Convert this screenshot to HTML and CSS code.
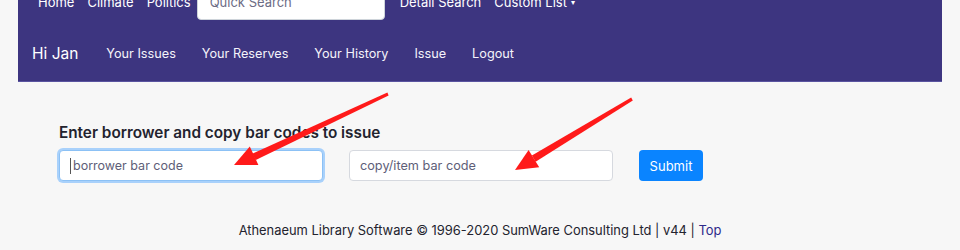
FILE: index.html
```html
<!DOCTYPE html>
<html lang="en">
<head>
  <meta charset="UTF-8" />
  <meta name="viewport" content="width=device-width, initial-scale=1" />
  <title>Issue</title>
  <link rel="stylesheet" href="styles.css">
</head>
<body>

  <!-- Barre de navigation -->
  <header class="navbar">
    <div class="top-row">
      <a href="#">Home</a>
      <a href="#">Climate</a>
      <a href="#">Politics</a>
      <input type="text" class="quick-search" placeholder="Quick Search" />
      <a href="#" class="detail">Detail Search</a>
      <a href="#">Custom List <span class="caret">&#9662;</span></a>
    </div>
    <div class="user-row">
      <span class="hello">Hi Jan</span>
      <a href="#">Your Issues</a>
      <a href="#">Your Reserves</a>
      <a href="#">Your History</a>
      <a href="#">Issue</a>
      <a href="#">Logout</a>
    </div>
  </header>

  <!-- Formulaire de pret -->
  <main class="content">
    <h3>Enter borrower and copy bar codes to issue</h3>
    <form class="issue-form">
      <div class="field focused">
        <span class="cursor"></span>
        <input type="text" placeholder="borrower bar code" />
      </div>
      <div class="field">
        <input type="text" placeholder="copy/item bar code" />
      </div>
      <button type="button" class="submit-btn">Submit</button>
    </form>
  </main>

  <footer>
    Athenaeum Library Software &copy; 1996-2020 SumWare Consulting Ltd | v44 | <a href="#">Top</a>
  </footer>

  <!-- Fleches rouges (annotation par-dessus la capture) -->
  <svg class="arrows" width="960" height="250" viewBox="0 0 960 250">
    <polygon points="388.6,95.4 387.4,92.6 252.2,153.8 255.8,160.1" fill="#ff1a1a" />
    <polygon points="234,165 249.8,146.6 258.4,165" fill="#ff1a1a" />
    <polygon points="632.8,100.4 631.2,97.6 531.9,155.5 535.6,161.7" fill="#ff1a1a" />
    <polygon points="515,170 528.6,150 539.2,167.2" fill="#ff1a1a" />
  </svg>

</body>
</html>
```

FILE: styles.css
```css
body {
  font-family: Inter, "Noto Sans", sans-serif;
  margin: 0;
  padding: 0;
  background: #f7f7f7;
  color: #23232e;
  position: relative;
  height: 250px;
  overflow: hidden;
}
a {
  text-decoration: none;
}

/* Barre du haut */
.navbar {
  margin: -20px 18px 0;
  background: #3d3580;
  border-bottom: 1px solid #5a54a0;
}
.top-row {
  display: flex;
  align-items: center;
  height: 44px;
  padding-left: 20px;
}
.top-row a {
  color: #fff;
  font-size: 13px;
  margin-right: 13px;
}
.quick-search {
  width: 188px;
  height: 36px;
  box-sizing: border-box;
  border: 1px solid #ced4da;
  border-radius: 4px;
  padding: 0 12px;
  font-family: inherit;
  font-size: 13px;
  margin: 0 15px 0 -7px;
}
.quick-search::placeholder {
  color: #6c6c85;
}
.top-row .caret {
  font-size: 8px;
  vertical-align: 2px;
}
.user-row {
  display: flex;
  align-items: center;
  height: 57px;
  padding: 2px 0 0 14px;
  box-sizing: border-box;
}
.hello {
  color: #fff;
  font-size: 15.5px;
  margin-right: 28px;
}
.user-row a {
  color: #f4f3fa;
  font-size: 12.7px;
  margin-right: 26px;
}

/* Contenu */
.content {
  padding: 39px 0 0 59px;
}
.content h3 {
  font-size: 15.3px;
  font-weight: 600;
  line-height: 24px;
  margin: 0 0 5px;
}
.issue-form {
  display: flex;
  align-items: center;
  gap: 26px;
}
.field {
  position: relative;
}
.field input {
  width: 264px;
  height: 31px;
  box-sizing: border-box;
  border: 1px solid #d6d9df;
  border-radius: 4px;
  background: #fff;
  padding: 0 10px;
  font-family: inherit;
  font-size: 12.7px;
  display: block;
}
.field input::placeholder {
  color: #5e5e78;
}
.field.focused input {
  border-color: #8cc1f5;
  box-shadow: 0 0 0 2px #a9d1fb;
  padding-left: 13px;
  font-size: 12.5px;
}
.cursor {
  position: absolute;
  left: 11px;
  top: 8px;
  width: 1px;
  height: 16px;
  background: #555;
}
.submit-btn {
  width: 64px;
  height: 31px;
  background: #0a84ff;
  color: #fff;
  border: none;
  border-radius: 4px;
  font-family: inherit;
  font-size: 13px;
}

/* Pied de page */
footer {
  text-align: center;
  font-size: 12.9px;
  line-height: 20px;
  margin-top: 40px;
  color: #23232e;
}
footer a {
  color: #2e2a8a;
}

/* Annotation */
.arrows {
  position: absolute;
  top: 0;
  left: 0;
  pointer-events: none;
}
```
